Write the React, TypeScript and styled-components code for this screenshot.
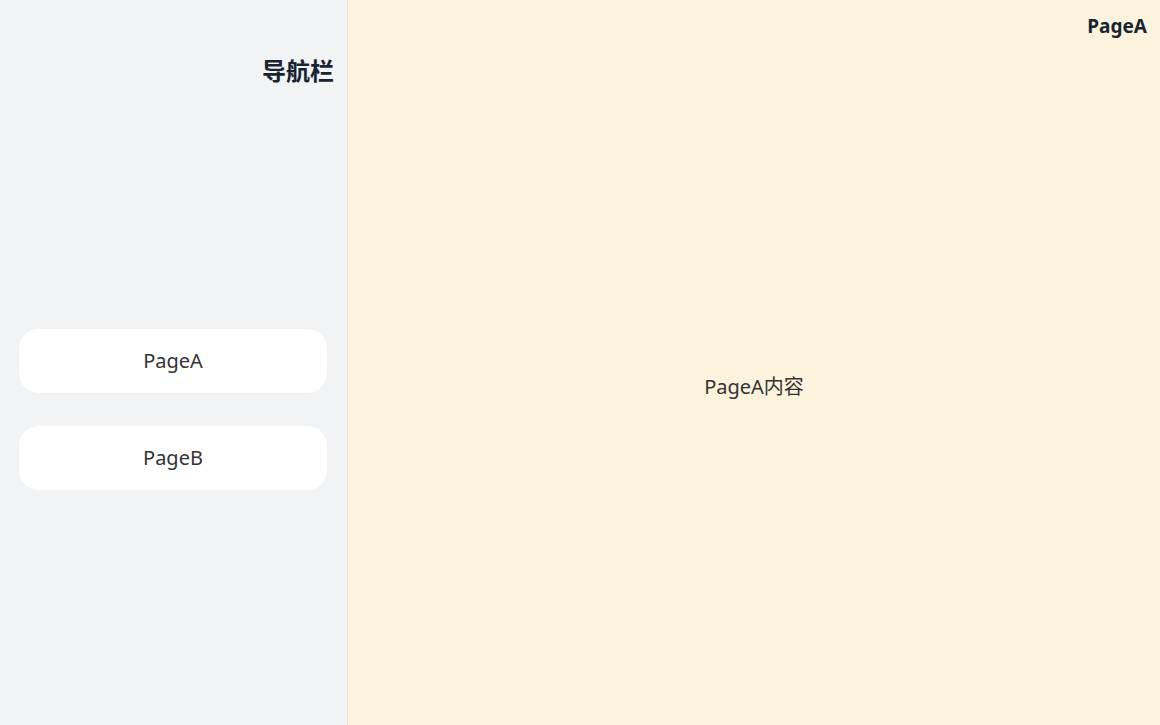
import React from 'react';
import styled, { createGlobalStyle } from 'styled-components';

const GlobalStyle = createGlobalStyle`
  html, body {
    margin: 0;
    padding: 0;
    width: 100%;
    height: 100%;
  }
  body {
    font-family: "Noto Sans", "Noto Sans CJK SC", sans-serif;
  }
  #root {
    height: 100%;
  }
`;

const Layout = styled.div`
  display: flex;
  width: 100vw;
  height: 100vh;
  overflow: hidden;
`;

const Sidebar = styled.aside`
  width: 347px;
  flex-shrink: 0;
  background-color: #f1f3f5;
  border-right: 1px solid #e4e5e8;
  display: flex;
  flex-direction: column;
`;

const SidebarTitle = styled.div`
  height: 94px;
  box-sizing: border-box;
  padding: 53px 13px 0 0;
  text-align: right;
  font-family: "Noto Sans CJK SC", sans-serif;
  font-size: 24px;
  font-weight: 700;
  line-height: 34px;
  color: #182431;
`;

const NavList = styled.nav`
  flex: 1;
  display: flex;
  flex-direction: column;
  justify-content: center;
  gap: 33px;
  padding: 0 20px 0 19px;
`;

const NavButton = styled.button<{ $active?: boolean }>`
  height: 64px;
  border: none;
  border-radius: 20px;
  background-color: #ffffff;
  font-family: "Noto Sans", "Noto Sans CJK SC", sans-serif;
  font-size: 20px;
  color: #333333;
  padding-bottom: 2px;
  cursor: pointer;
`;

const Content = styled.main`
  flex: 1;
  background-color: #fcf3dc;
  display: flex;
  flex-direction: column;
`;

const Header = styled.header`
  height: 46px;
  display: flex;
  align-items: center;
  justify-content: flex-end;
  padding: 6px 13px 0 0;
  box-sizing: border-box;
  font-family: "Noto Sans", sans-serif;
  font-size: 19px;
  font-weight: 700;
  color: #182431;
`;

const Body = styled.div`
  flex: 1;
  display: flex;
  align-items: center;
  justify-content: center;
  font-family: "Noto Sans", "Noto Sans CJK SC", sans-serif;
  font-size: 20px;
  color: #333333;
`;

export default function App() {
  const pages = ['PageA', 'PageB'];
  const current = 'PageA';

  return (
    <>
      <GlobalStyle />
      <Layout>
        <Sidebar>
          <SidebarTitle>导航栏</SidebarTitle>
          <NavList>
            {pages.map((p) => (
              <NavButton key={p} $active={p === current}>
                {p}
              </NavButton>
            ))}
          </NavList>
        </Sidebar>
        <Content>
          <Header>{current}</Header>
          <Body>{current}内容</Body>
        </Content>
      </Layout>
    </>
  );
}
